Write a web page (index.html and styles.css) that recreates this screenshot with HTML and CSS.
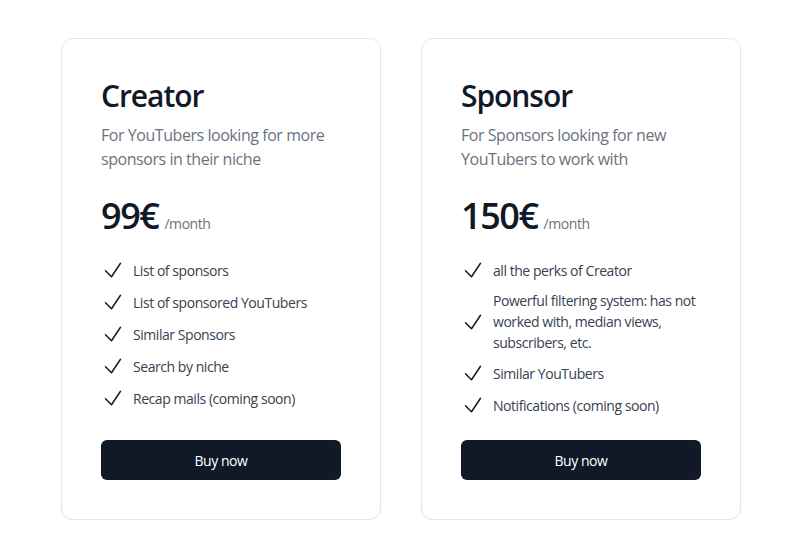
FILE: index.html
```html
<!DOCTYPE html>
<html lang="en">
<head>
<meta charset="utf-8">
<title>Pricing</title>
<link rel="stylesheet" href="styles.css">
</head>
<body>
<main class="pricing">
  <section class="card">
    <h2 class="card-title">Creator</h2>
    <p class="card-desc">For YouTubers looking for more sponsors in their niche</p>
    <div class="price"><span class="amount">99€</span><span class="period">/month</span></div>
    <ul class="features">
      <li><svg class="check" viewBox="0 0 24 24" fill="none" stroke="currentColor" stroke-width="1.5"><path stroke-linecap="round" stroke-linejoin="round" d="M4.5 12.75l6 6 9-13.5"/></svg><span>List of sponsors</span></li>
      <li><svg class="check" viewBox="0 0 24 24" fill="none" stroke="currentColor" stroke-width="1.5"><path stroke-linecap="round" stroke-linejoin="round" d="M4.5 12.75l6 6 9-13.5"/></svg><span>List of sponsored YouTubers</span></li>
      <li><svg class="check" viewBox="0 0 24 24" fill="none" stroke="currentColor" stroke-width="1.5"><path stroke-linecap="round" stroke-linejoin="round" d="M4.5 12.75l6 6 9-13.5"/></svg><span>Similar Sponsors</span></li>
      <li><svg class="check" viewBox="0 0 24 24" fill="none" stroke="currentColor" stroke-width="1.5"><path stroke-linecap="round" stroke-linejoin="round" d="M4.5 12.75l6 6 9-13.5"/></svg><span>Search by niche</span></li>
      <li><svg class="check" viewBox="0 0 24 24" fill="none" stroke="currentColor" stroke-width="1.5"><path stroke-linecap="round" stroke-linejoin="round" d="M4.5 12.75l6 6 9-13.5"/></svg><span>Recap mails (coming soon)</span></li>
    </ul>
    <button class="buy" type="button">Buy now</button>
  </section>
  <section class="card">
    <h2 class="card-title">Sponsor</h2>
    <p class="card-desc">For Sponsors looking for new YouTubers to work with</p>
    <div class="price"><span class="amount">150€</span><span class="period">/month</span></div>
    <ul class="features">
      <li><svg class="check" viewBox="0 0 24 24" fill="none" stroke="currentColor" stroke-width="1.5"><path stroke-linecap="round" stroke-linejoin="round" d="M4.5 12.75l6 6 9-13.5"/></svg><span>all the perks of Creator</span></li>
      <li><svg class="check" viewBox="0 0 24 24" fill="none" stroke="currentColor" stroke-width="1.5"><path stroke-linecap="round" stroke-linejoin="round" d="M4.5 12.75l6 6 9-13.5"/></svg><span>Powerful filtering system: has not worked with, median views, subscribers, etc.</span></li>
      <li><svg class="check" viewBox="0 0 24 24" fill="none" stroke="currentColor" stroke-width="1.5"><path stroke-linecap="round" stroke-linejoin="round" d="M4.5 12.75l6 6 9-13.5"/></svg><span>Similar YouTubers</span></li>
      <li><svg class="check" viewBox="0 0 24 24" fill="none" stroke="currentColor" stroke-width="1.5"><path stroke-linecap="round" stroke-linejoin="round" d="M4.5 12.75l6 6 9-13.5"/></svg><span>Notifications (coming soon)</span></li>
    </ul>
    <button class="buy" type="button">Buy now</button>
  </section>
</main>
</body>
</html>
```

FILE: styles.css
```css
* { box-sizing: border-box; }
html, body { margin: 0; padding: 0; background: #ffffff; }
body {
  font-family: "Open Sans", "Noto Sans", "Liberation Sans", sans-serif;
  color: #111827;
  letter-spacing: -0.028em;
}
.pricing {
  display: grid;
  grid-template-columns: 320px 320px;
  gap: 40px;
  justify-content: center;
  padding-top: 38px;
}
.card {
  display: flex;
  flex-direction: column;
  border: 1px solid #e5e7eb;
  border-radius: 12px;
  box-shadow: 0 1px 2px rgba(0,0,0,0.04);
  padding: 39px;
  background: #fff;
}
.card-title {
  margin: 0;
  font-size: 30px;
  line-height: 36px;
  font-weight: 600;
  letter-spacing: -0.035em;
  color: #111827;
}
.card-desc {
  margin: 9px 0 0;
  font-size: 16px;
  line-height: 24px;
  color: #6b7280;
}
.price {
  margin-top: 25px;
  display: flex;
  align-items: baseline;
  gap: 6px;
}
.amount {
  font-size: 36px;
  line-height: 40px;
  font-weight: 600;
  letter-spacing: -0.04em;
  color: #111827;
}
.period {
  font-size: 14px;
  color: #6b7280;
}
.features {
  list-style: none;
  margin: 22px 0 0;
  padding: 0;
  flex: 1;
  display: flex;
  flex-direction: column;
  gap: 8px;
}
.features li {
  display: flex;
  align-items: center;
  gap: 8px;
  font-size: 14px;
  line-height: 21px;
  color: #374151;
}
.check {
  width: 24px;
  height: 24px;
  flex: none;
  color: #111827;
}
.buy {
  margin-top: 23px;
  height: 40px;
  border: none;
  border-radius: 6px;
  background: #111827;
  color: #ffffff;
  font-family: inherit;
  letter-spacing: inherit;
  font-size: 14px;
  cursor: pointer;
}
```
